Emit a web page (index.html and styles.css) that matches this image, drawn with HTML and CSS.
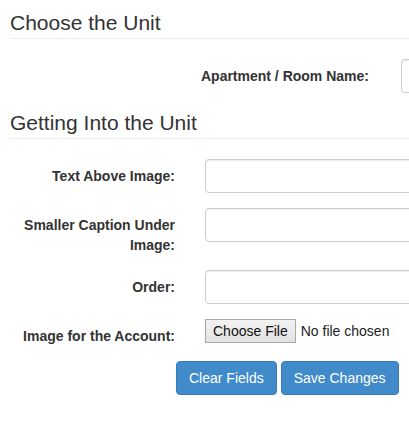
FILE: index.html
```html
<!DOCTYPE html>
<html lang="en">
<head>
<meta charset="utf-8">
<title>Unit Settings</title>
<link rel="stylesheet" href="styles.css">
</head>
<body>
<div class="page">
  <h3 class="section-title first">Choose the Unit</h3>
  <div class="row row-wide">
    <label class="field-label" for="room">Apartment / Room Name:</label>
    <div class="field-control wide-control"><input id="room" class="text-input" type="text"></div>
  </div>

  <h3 class="section-title">Getting Into the Unit</h3>
  <div class="row">
    <label class="field-label" for="above">Text Above Image:</label>
    <div class="field-control"><input id="above" class="text-input" type="text"></div>
  </div>
  <div class="row">
    <label class="field-label" for="caption">Smaller Caption Under Image:</label>
    <div class="field-control"><input id="caption" class="text-input" type="text"></div>
  </div>
  <div class="row">
    <label class="field-label" for="order">Order:</label>
    <div class="field-control"><input id="order" class="text-input" type="text"></div>
  </div>
  <div class="row">
    <label class="field-label" for="image">Image for the Account:</label>
    <div class="field-control">
      <label class="file-field" for="image">
        <span class="file-btn">Choose File</span>
        <span class="file-name">No file chosen</span>
      </label>
      <input id="image" class="file-hidden" type="file">
    </div>
  </div>
  <div class="actions">
    <button class="btn" type="button">Clear Fields</button>
    <button class="btn" type="button">Save Changes</button>
  </div>
</div>
</body>
</html>
```

FILE: styles.css
```css
html, body {
  margin: 0;
  padding: 0;
  overflow: hidden;
  background: #fff;
}

body {
  font-family: "Liberation Sans", Arial, sans-serif;
  font-size: 14px;
  line-height: 20px;
  color: #333;
}

.page {
  width: 700px;
  padding-left: 10px;
}

.section-title {
  font-size: 21px;
  font-weight: normal;
  line-height: 23px;
  margin: 18px 0 20px;
  padding-bottom: 4px;
  border-bottom: 1px solid #eee;
  color: #333;
}

.section-title.first {
  margin-top: 11px;
}

.row {
  display: grid;
  grid-template-columns: 190px 1fr;
  margin-left: -10px;
  margin-bottom: 15px;
  align-items: start;
}

.row-wide {
  grid-template-columns: 384px 1fr;
}

.field-label {
  display: block;
  padding: 7px 15px 0;
  text-align: right;
  font-weight: bold;
  font-size: 14px;
  line-height: 20px;
  color: #333;
}

.field-control {
  padding-left: 15px;
}

.wide-control {
  padding-left: 17px;
}

.text-input {
  display: block;
  box-sizing: border-box;
  width: 320px;
  height: 34px;
  padding: 6px 12px;
  font: 14px "Liberation Sans", Arial, sans-serif;
  color: #555;
  background: #fff;
  border: 1px solid #ccc;
  border-radius: 4px;
  box-shadow: inset 0 1px 1px rgba(0, 0, 0, 0.075);
  margin: 0;
}

.file-field {
  display: flex;
  align-items: center;
  gap: 5px;
  font-size: 14px;
  line-height: 16px;
  color: #222;
}

.file-btn {
  display: inline-block;
  padding: 3px 7px;
  line-height: 16px;
  border: 1px solid #a9a9a9;
  background: linear-gradient(#f2f2f2, #e2e2e2);
  color: #111;
}

.file-name {
  color: #222;
}

.file-hidden {
  display: none;
}

.actions {
  display: flex;
  gap: 4px;
  padding-left: 166px;
}

.btn {
  font: 14px/20px "Liberation Sans", Arial, sans-serif;
  padding: 6px 12px;
  color: #fff;
  background: #428bca;
  border: 1px solid #357ebd;
  border-radius: 4px;
  margin: 0;
}
```
